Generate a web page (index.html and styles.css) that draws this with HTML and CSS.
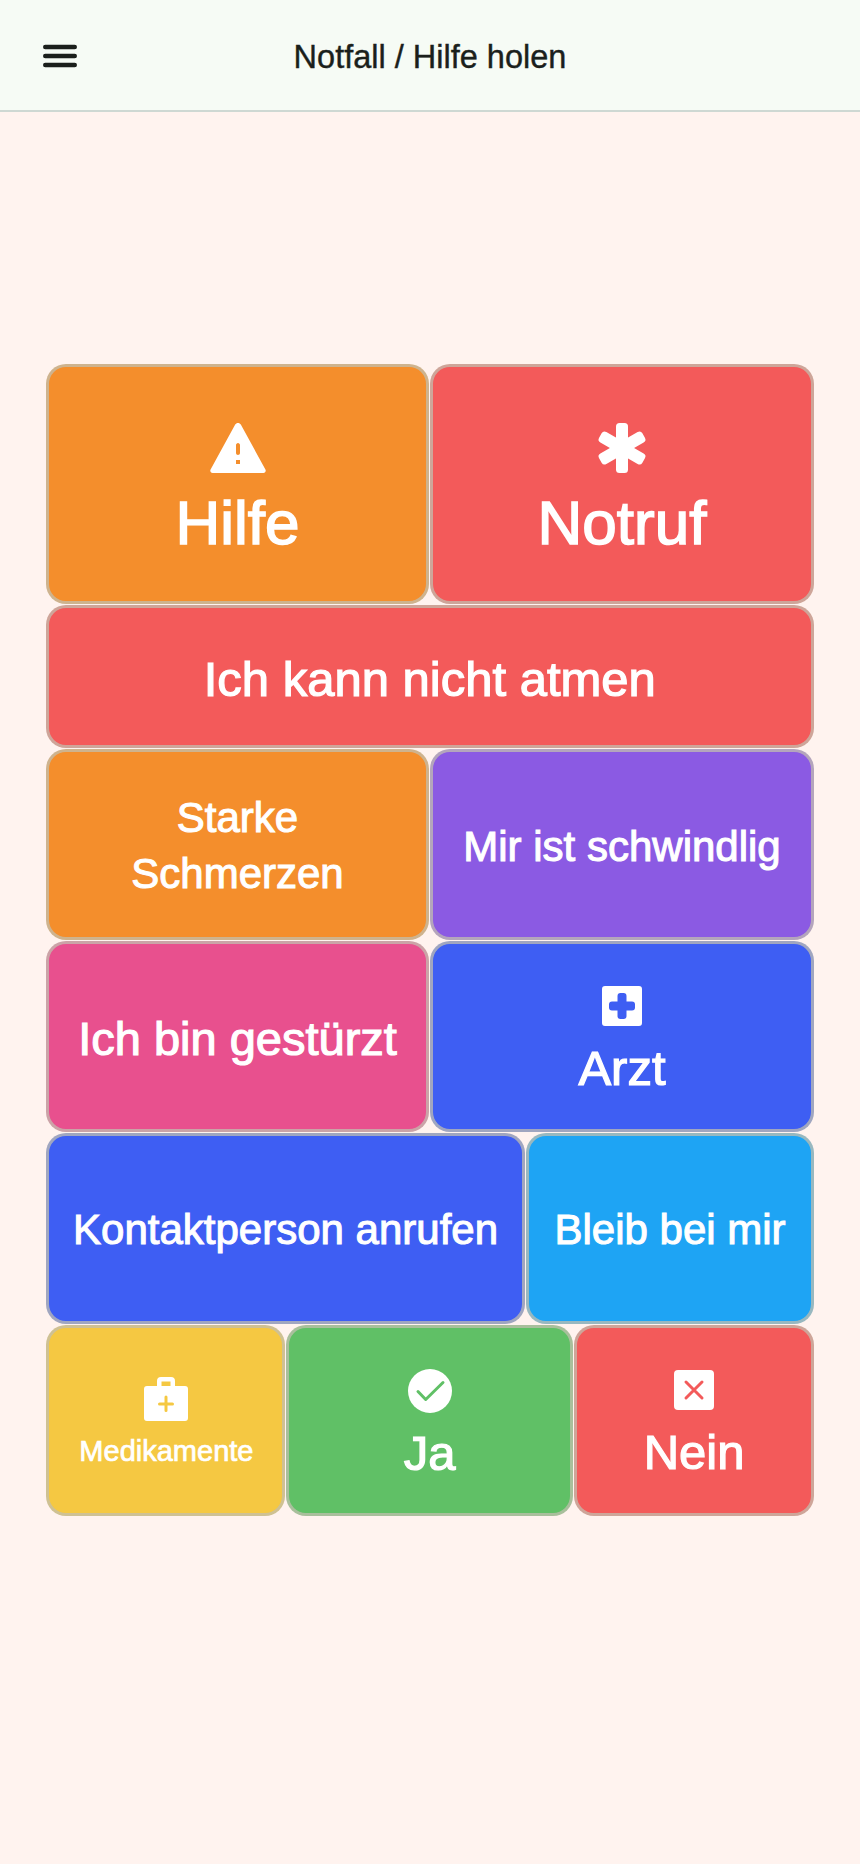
FILE: index.html
```html
<!DOCTYPE html>
<html lang="de">
<head>
<meta charset="utf-8">
<title>Notfall / Hilfe holen</title>
<link rel="stylesheet" href="styles.css">
</head>
<body>
<header class="topbar">
  <button class="menu" aria-label="Menü">
    <svg viewBox="0 0 34 24" width="34" height="24"><path d="M2.300 3h29.400M2.300 12h29.400M2.300 21h29.400" fill="none" stroke="#1b1f1c" stroke-width="4.600" stroke-linecap="round"/></svg>
  </button>
  <h1 class="title">Notfall / Hilfe holen</h1>
</header>
<main class="board">
  <button class="tile s8 r240 orange fs-xl"><svg class="ic ic-l" viewBox="0 0 56 50"><path fill-rule="evenodd" d="M28 0c1.200 0 2.200.6 2.800 1.600l24.600 44.800c.9 1.600-.2 3.600-2 3.600H2.600c-1.800 0-2.900-2-2-3.600L25.200 1.600C25.800.6 26.800 0 28 0zM26 22v8c0 1 .9 2 2 2s2-1 2-2v-8c0-1-.9-2-2-2s-2 1-2 2zM26 37v4h4v-4z" fill="#fff"/></svg><span>Hilfe</span></button>
  <button class="tile s8 r240 red fs-xl"><svg class="ic ic-l" viewBox="0 0 50 50"><g fill="#fff"><rect x="19" y="0" width="12" height="50" rx="3.500"/><rect x="19" y="0" width="12" height="50" rx="3.500" transform="rotate(60 25 25)"/><rect x="19" y="0" width="12" height="50" rx="3.500" transform="rotate(-60 25 25)"/></g></svg><span>Notruf</span></button>
  <button class="tile s16 r143 red fs-m"><span>Ich kann nicht atmen</span></button>
  <button class="tile s8 r191 orange fs-s"><span class="lines">Starke Schmerzen</span></button>
  <button class="tile s8 r191 purple fs-s"><span>Mir ist schwindlig</span></button>
  <button class="tile s8 r191 pink fs-m2"><span>Ich bin gestürzt</span></button>
  <button class="tile s8 r191 blue fs-l"><svg class="ic ic-m" viewBox="0 0 40 40"><path fill-rule="evenodd" d="M3 0h34a3 3 0 0 1 3 3v34a3 3 0 0 1-3 3H3a3 3 0 0 1-3-3V3a3 3 0 0 1 3-3zM15.500 10v5.500H10a3 3 0 0 0-3 3v3a3 3 0 0 0 3 3h5.500V30a3 3 0 0 0 3 3h3a3 3 0 0 0 3-3v-5.500H30a3 3 0 0 0 3-3v-3a3 3 0 0 0-3-3h-5.500V10a3 3 0 0 0-3-3h-3a3 3 0 0 0-3 3z" fill="#fff"/></svg><span>Arzt</span></button>
  <button class="tile s10 r191 blue fs-s"><span>Kontaktperson anrufen</span></button>
  <button class="tile s6 r191 sky fs-s"><span>Bleib bei mir</span></button>
  <button class="tile s5 r191 yellow fs-xs"><svg class="ic ic-m2" viewBox="0 0 44 44"><path fill-rule="evenodd" d="M13 9V4a4 4 0 0 1 4-4h10a4 4 0 0 1 4 4v5h10a3 3 0 0 1 3 3v29a3 3 0 0 1-3 3H3a3 3 0 0 1-3-3V12a3 3 0 0 1 3-3zM17.500 4.500V9h9V4.500zM20.500 20v5.500H15.500a1.500 1.500 0 0 0 0 3h5V33.500a1.500 1.500 0 0 0 3 0v-5h5a1.500 1.500 0 0 0 0-3h-5V20a1.500 1.500 0 0 0-3 0z" fill="#fff"/></svg><span>Medikamente</span></button>
  <button class="tile s6 r191 green fs-l"><svg class="ic ic-m2" viewBox="0 0 44 44"><circle cx="22" cy="22" r="22" fill="#fff"/><path d="M10 22.500l7.700 8L35 13.500" fill="none" stroke="#60c066" stroke-width="3" stroke-linecap="round" stroke-linejoin="round"/></svg><span>Ja</span></button>
  <button class="tile s5 r191 red fs-l"><svg class="ic ic-m" viewBox="0 0 40 40"><rect width="40" height="40" rx="4" fill="#fff"/><path d="M12 12l16 16M28 12L12 28" stroke="#f35a5a" stroke-width="3" stroke-linecap="round"/></svg><span>Nein</span></button>
</main>
</body>
</html>
```
FILE: styles.css
```css
* { box-sizing: border-box; }
html, body { margin: 0; padding: 0; }
body {
  min-height: 1864px;
  background: #fff3ef;
  font-family: "Liberation Sans", Arial, sans-serif;
}
.topbar {
  height: 112px;
  background: #f6fbf5;
  border-bottom: 2px solid #ced8d3;
  display: flex;
  align-items: center;
  position: relative;
}
.menu {
  margin: 1px 0 0 43px;
  padding: 0;
  width: 34px;
  height: 24px;
  border: 0;
  background: none;
  display: block;
}
.menu svg { display: block; }
.title {
  margin: 3px 0 0;
  position: absolute;
  left: 0;
  right: 0;
  text-align: center;
  font-size: 32.5px;
  line-height: 36px;
  font-weight: 400;
  color: #1b1f1c;
  -webkit-text-stroke: 0.4px #1b1f1c;
}
.board {
  margin: 252px 46.25px 0 45.75px;
  display: grid;
  grid-template-columns: repeat(16, 1fr);
  gap: 1px;
}
.tile {
  border: 3px solid rgba(193, 191, 175, 0.75);
  border-radius: 20px;
  color: #fff;
  font-family: inherit;
  padding: 3px 4px 0;
  display: flex;
  flex-direction: column;
  align-items: center;
  justify-content: center;
  -webkit-text-stroke: 0.025em #fff;
}
.s5 { grid-column: span 5; }
.s6 { grid-column: span 6; }
.s8 { grid-column: span 8; }
.s10 { grid-column: span 10; }
.s16 { grid-column: span 16; }
.r240 { height: 239.5px; }
.r143 { height: 143px; }
.r191 { height: 191px; }
.orange { background-color: #f48e2c; }
.red { background-color: #f35a5a; }
.purple { background-color: #8b5ae3; padding-top: 6px; }
.pink { background-color: #e8508e; }
.blue { background-color: #3e5ef3; }
.sky { background-color: #1ea4f4; }
.yellow { background-color: #f5c842; padding-left: 5px; padding-right: 3px; }
.green { background-color: #60c066; }
.fs-xl { font-size: 62px; line-height: 72px; padding-top: 15px; }
.fs-l { font-size: 49px; line-height: 56px; padding-top: 9px; }
.fs-m { font-size: 49px; line-height: 54px; padding-top: 5px; }
.fs-m2 { font-size: 47px; line-height: 54px; padding-top: 5px; }
.fs-s { font-size: 42px; line-height: 56px; }
.fs-xs { font-size: 29px; line-height: 40px; padding-top: 7px; }
.lines { display: block; max-width: 260px; }
.ic { display: block; flex: none; }
.ic-l { width: 56px; height: 50px; margin-bottom: 14px; }
.ic-m { width: 40px; height: 40px; margin-bottom: 14px; }
.ic-m2 { width: 44px; height: 44px; margin-bottom: 10px; }
.green.fs-l { padding-top: 9px; }
.green .ic-m2 { margin-bottom: 12px; }
```
